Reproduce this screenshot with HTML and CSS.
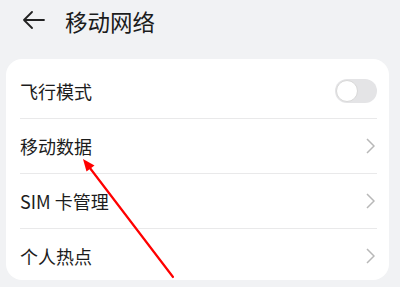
FILE: index.html
```html
<!DOCTYPE html>
<html lang="zh-CN">
<head>
<meta charset="utf-8">
<link rel="stylesheet" href="styles.css">
</head>
<body>
<div class="page">
  <header class="header">
    <svg class="back" width="24" height="20" viewBox="0 0 24 20"><path d="M22 9H2M10 1L2 9L10 17" fill="none" stroke="#222" stroke-width="1.8" stroke-linecap="round" stroke-linejoin="round"/></svg>
    <h1 class="title">移动网络</h1>
  </header>
  <section class="card">
    <div class="row">
      <span class="label">飞行模式</span>
      <span class="toggle"><span class="knob"></span></span>
    </div>
    <div class="row">
      <span class="label">移动数据</span>
      <svg class="chev" width="9" height="16" viewBox="0 0 9 16"><path d="M1 1L8 8L1 15" fill="none" stroke="#b8b8b8" stroke-width="1.5"/></svg>
    </div>
    <div class="row">
      <span class="label">SIM 卡管理</span>
      <svg class="chev" width="9" height="16" viewBox="0 0 9 16"><path d="M1 1L8 8L1 15" fill="none" stroke="#b8b8b8" stroke-width="1.5"/></svg>
    </div>
    <div class="row">
      <span class="label">个人热点</span>
      <svg class="chev" width="9" height="16" viewBox="0 0 9 16"><path d="M1 1L8 8L1 15" fill="none" stroke="#b8b8b8" stroke-width="1.5"/></svg>
    </div>
  </section>
  <svg class="pointer" width="400" height="287" viewBox="0 0 400 287">
    <line x1="173" y1="277" x2="88" y2="165.5" stroke="#f00" stroke-width="2.2" stroke-linecap="round"/>
    <polygon points="83,159 94.5,165.5 86.5,171.5" fill="#f00"/>
  </svg>
</div>
</body>
</html>
```
FILE: styles.css
```css
html, body {
  margin: 0;
  padding: 0;
  background: #f1f2f4;
}
body {
  font-family: "Noto Sans CJK SC", "Noto Sans", sans-serif;
  color: #1c1c1c;
  width: 400px;
  height: 287px;
  overflow: hidden;
}
.page {
  position: relative;
  width: 400px;
  height: 287px;
}
.header {
  display: flex;
  align-items: center;
  height: 42px;
  padding-left: 22px;
}
.back {
  display: block;
  margin-right: 19px;
}
.title {
  margin: 0;
  font-size: 22.5px;
  font-weight: 400;
  line-height: 30px;
  color: #1c1c1c;
}
.card {
  margin: 17px 11px 0 6px;
  background: #fff;
  border-radius: 16px;
  padding: 5px 12px 0 14px;
  height: 221px;
  box-sizing: border-box;
}
.row {
  display: flex;
  align-items: center;
  justify-content: space-between;
  height: 54px;
  border-bottom: 1px solid #e9e9ea;
}
.row:last-child {
  border-bottom: none;
}
.label {
  font-size: 18px;
  line-height: 24px;
  color: #1c1c1c;
}
.toggle {
  position: relative;
  width: 42px;
  height: 24px;
  border-radius: 12px;
  background: #e4e4e6;
  display: block;
}
.knob {
  position: absolute;
  left: 1px;
  top: 1px;
  width: 20px;
  height: 20px;
  border-radius: 50%;
  background: #fff;
  border: 1px solid #d8d8d8;
}
.chev {
  display: block;
  margin-right: 2px;
}
.pointer {
  position: absolute;
  left: 0;
  top: 0;
  pointer-events: none;
}
```
